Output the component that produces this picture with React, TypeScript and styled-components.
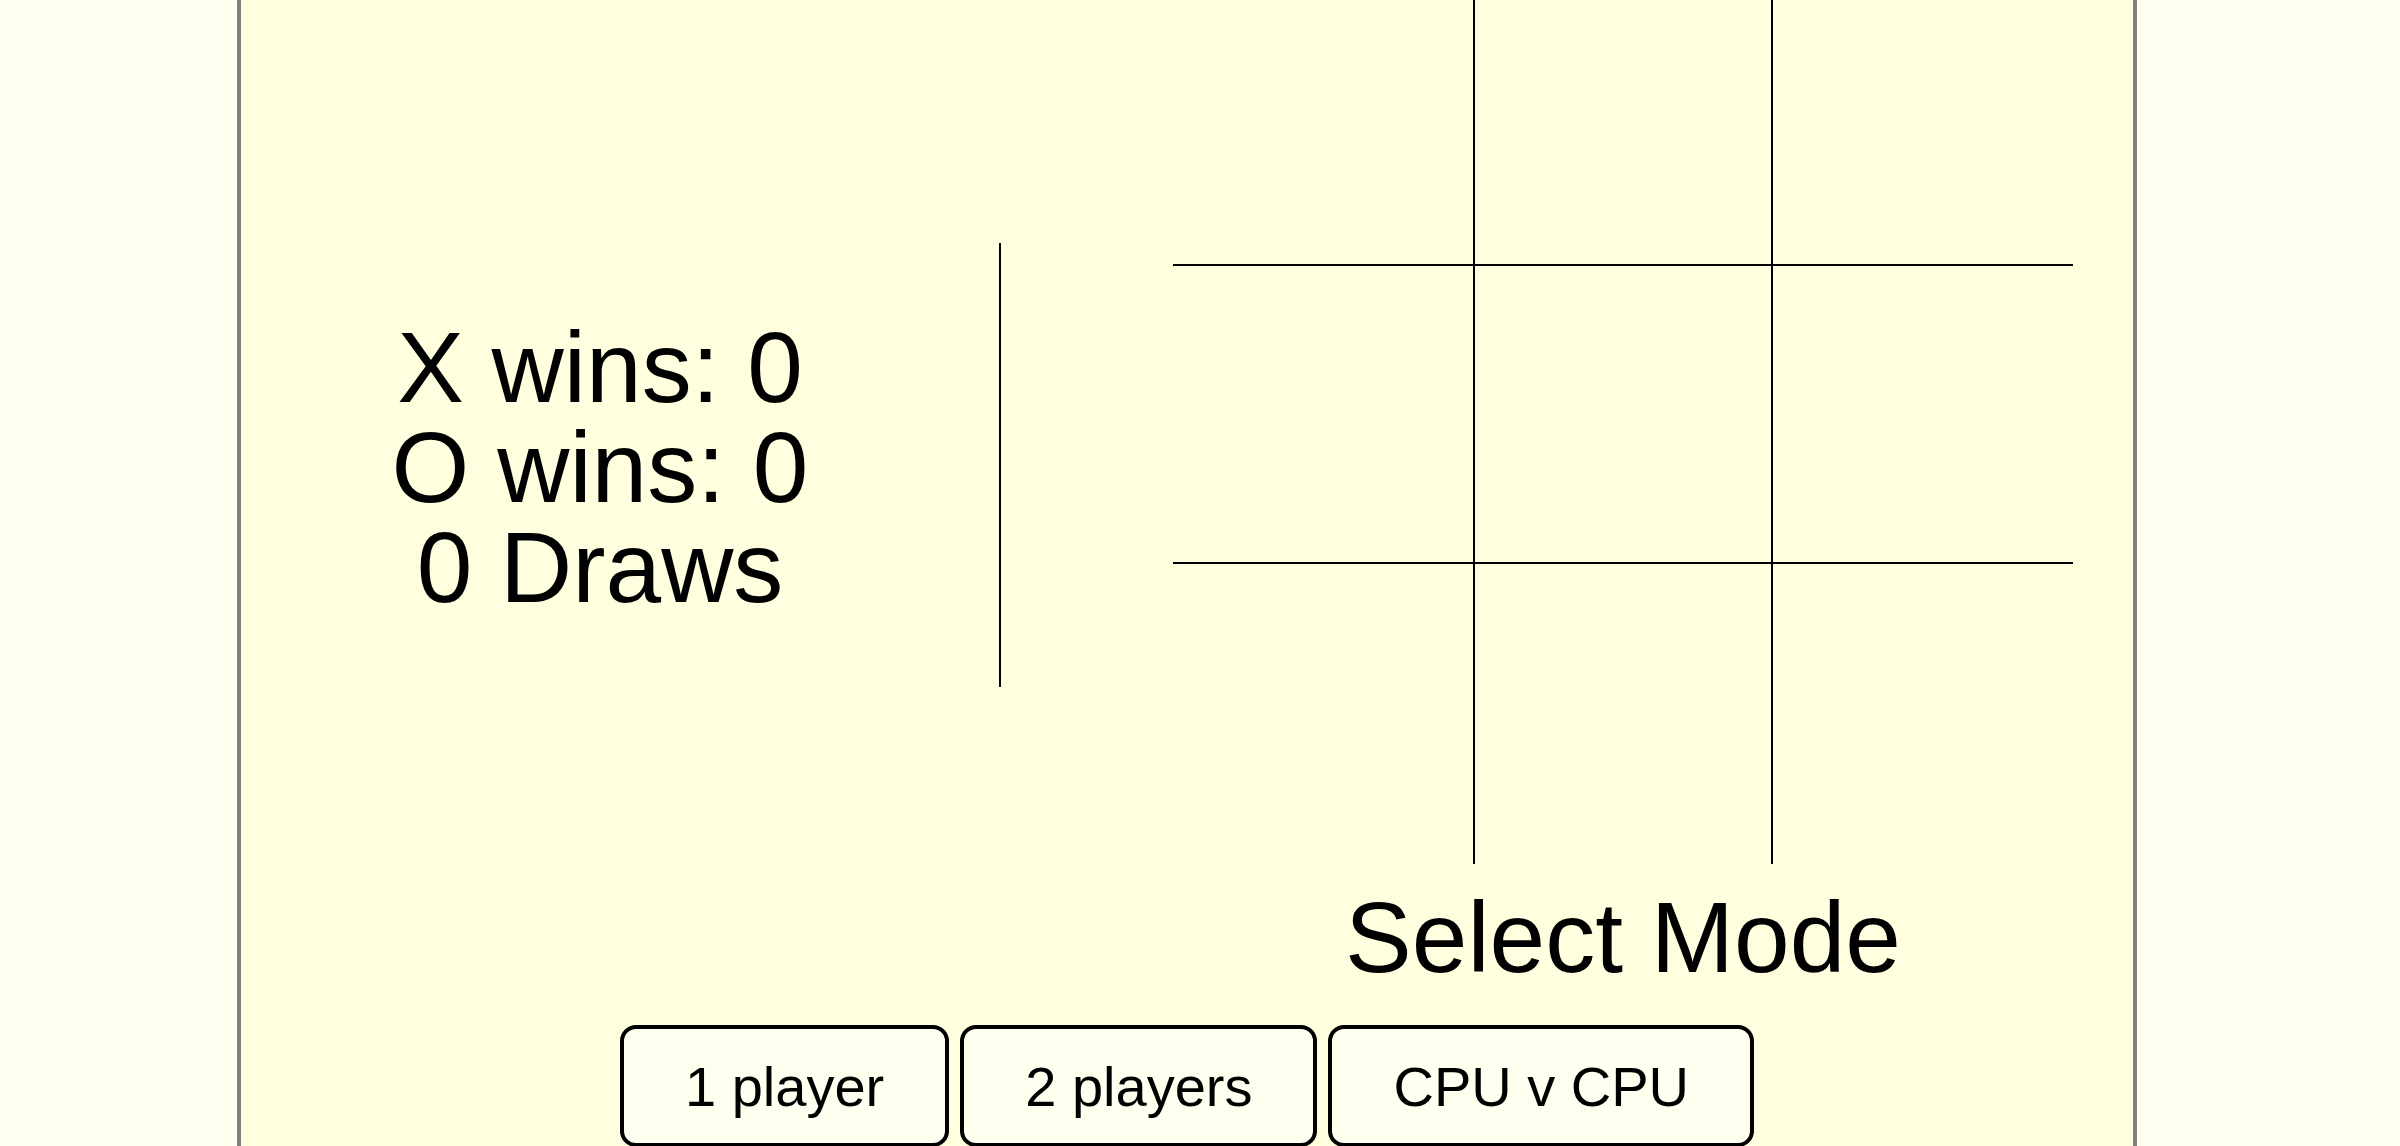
import React from "react";
import styled, { createGlobalStyle } from "styled-components";

const GlobalStyle = createGlobalStyle`
  html, body {
    margin: 0;
    padding: 0;
    height: 1146px;
    overflow: hidden;
    background: #fffff0;
    font-family: "Liberation Sans", Arial, sans-serif;
    color: #000;
  }
`;

const Frame = styled.div`
  box-sizing: border-box;
  width: 1900px;
  margin: -40px 0 0 237px;
  border: 4px solid #808080;
  background: #ffffe0;
  padding-bottom: 60px;
`;

const MainRow = styled.div`
  display: flex;
  align-items: flex-start;
`;

const ScorePanel = styled.div`
  width: 718px;
  margin-top: 353px;
  text-align: center;
`;

const ScoreLine = styled.div`
  font-size: 100px;
  line-height: 100px;
  white-space: nowrap;
`;

const Divider = styled.div`
  width: 2px;
  height: 444px;
  margin: 279px 0 0 40px;
  background: #000;
`;

const BoardColumn = styled.div`
  display: flex;
  flex-direction: column;
  align-items: center;
  margin-left: 172px;
  width: 900px;
`;

const Board = styled.div`
  display: grid;
  grid-template-columns: repeat(3, 300px);
  grid-template-rows: repeat(3, 300px);
`;

const Cell = styled.button<{ $col: number; $row: number }>`
  box-sizing: border-box;
  width: 300px;
  height: 300px;
  padding: 0;
  margin: 0;
  background: transparent;
  border: 0 solid #000;
  border-left-width: ${(p) => (p.$col === 1 ? "2px" : "0")};
  border-right-width: ${(p) => (p.$col === 1 ? "2px" : "0")};
  border-top-width: ${(p) => (p.$row === 1 ? "2px" : "0")};
  border-bottom-width: ${(p) => (p.$row === 1 ? "2px" : "0")};
  font-family: inherit;
  font-size: 200px;
  cursor: pointer;
`;

const Heading = styled.h2`
  margin: 16px 0 0;
  font-size: 100px;
  font-weight: normal;
  line-height: 115px;
  white-space: nowrap;
`;

const ButtonRow = styled.div`
  display: flex;
  justify-content: center;
  gap: 11px;
  margin-top: 30px;
`;

const ModeButton = styled.button`
  box-sizing: border-box;
  padding: 26px 61px 24px;
  border: 4px solid #000;
  border-radius: 16px;
  background: #fffff0;
  font-family: "Liberation Sans", Arial, sans-serif;
  font-size: 56px;
  line-height: 64px;
  color: #000;
  white-space: nowrap;
  cursor: pointer;
`;

const cells = Array.from({ length: 9 }, (_, i) => ({ row: Math.floor(i / 3), col: i % 3 }));

export default function App() {
  return (
    <>
      <GlobalStyle />
      <Frame>
        <MainRow>
          <ScorePanel>
            <ScoreLine>X wins: 0</ScoreLine>
            <ScoreLine>O wins: 0</ScoreLine>
            <ScoreLine>0 Draws</ScoreLine>
          </ScorePanel>
          <Divider />
          <BoardColumn>
            <Board>
              {cells.map((c, i) => (
                <Cell key={i} $row={c.row} $col={c.col} aria-label={`cell ${i + 1}`} />
              ))}
            </Board>
            <Heading>Select Mode</Heading>
          </BoardColumn>
        </MainRow>
        <ButtonRow>
          <ModeButton>1 player</ModeButton>
          <ModeButton>2 players</ModeButton>
          <ModeButton>CPU v CPU</ModeButton>
        </ButtonRow>
      </Frame>
    </>
  );
}
